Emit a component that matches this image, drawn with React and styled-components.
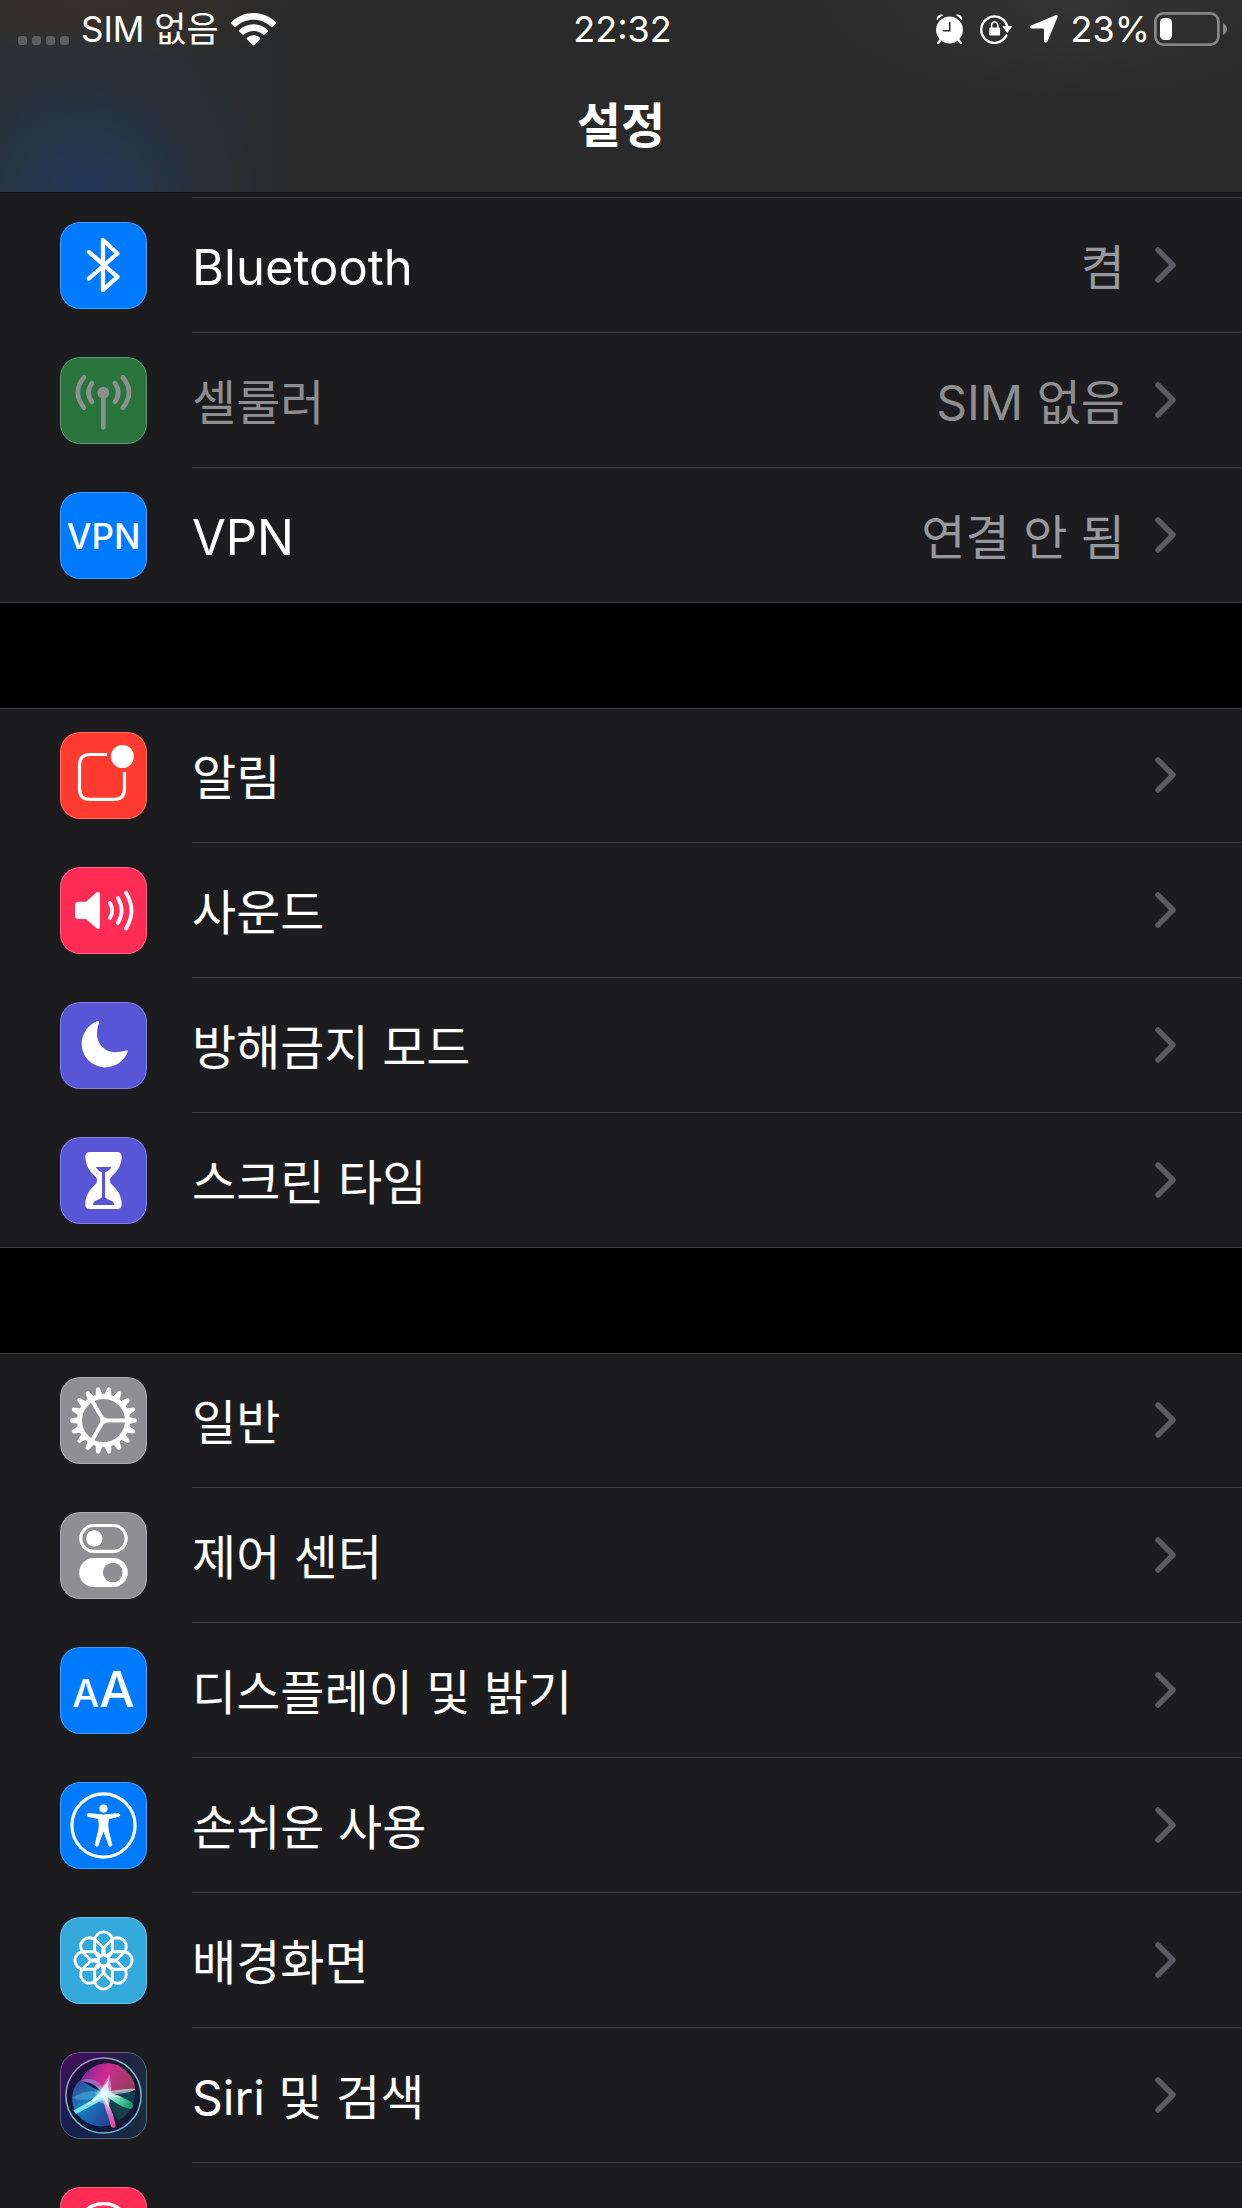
import React from 'react';
import styled, { createGlobalStyle } from 'styled-components';

const GlobalStyle = createGlobalStyle`
  *,
  *::before,
  *::after {
    box-sizing: border-box;
  }

  body {
    margin: 0;
    background-color: #000;
    color: #fff;
    font-family: Inter, 'Noto Sans CJK KR', sans-serif;
  }
`;

const Screen = styled.div`
  display: flex;
  flex-direction: column;
  height: 100vh;
  overflow: hidden;
`;

const Header = styled.header`
  flex-shrink: 0;
  border-bottom: 1px solid #141415;
  background:
    radial-gradient(circle at 85px 200px, #22365a 0, rgba(36, 55, 78, 0.85) 60px, rgba(38, 52, 66, 0.6) 110px, rgba(42, 42, 44, 0) 190px),
    radial-gradient(ellipse 200px 70px at 95px 0, #3a3028, rgba(42, 42, 42, 0)),
    radial-gradient(ellipse 260px 100px at 1070px 0, #343434, rgba(42, 42, 42, 0)),
    linear-gradient(90deg, #2d3134 0, #2a2a2b 300px);
`;

const StatusBar = styled.div`
  display: grid;
  grid-template-columns: 1fr auto 1fr;
  align-items: center;
  height: 58px;
  padding: 0 15px 0 18px;
  font-size: 36px;
  line-height: 48px;
`;

const StatusGroup = styled.div`
  display: flex;
  align-items: center;
  justify-content: ${({ $end }) => ($end ? 'flex-end' : 'flex-start')};
  gap: 12px;
`;

const Carrier = styled.span`
  font-size: 35px;
`;

const SignalDots = styled.span`
  display: flex;
  gap: 5px;
  padding-top: 23px;

  i {
    width: 9px;
    height: 9px;
    border-radius: 3px;
    background-color: #5e5e5e;
  }
`;

const StatusIcons = styled.span`
  display: flex;
  align-items: center;
  gap: 17px;
`;

const BatteryGroup = styled.span`
  display: flex;
  align-items: center;
  gap: 4px;
`;

const Title = styled.h1`
  margin: 0;
  height: 134px;
  padding-top: 38px;
  font-size: 48px;
  font-weight: 600;
  line-height: 60px;
  text-align: center;
`;

const Content = styled.main`
  flex: 1;
  min-height: 0;
  overflow: hidden;
`;

const Section = styled.ul`
  margin: 0 0 105px;
  padding: 0;
  list-style: none;
  background-color: #1c1c1e;
  box-shadow: ${({ $continued }) =>
    $continued ? 'inset 0 -1px #3d3d41' : 'inset 0 1px #3d3d41, inset 0 -1px #3d3d41'};

  /* bottom edge of the row scrolled under the header */
  &::before {
    content: '';
    display: ${({ $continued }) => ($continued ? 'block' : 'none')};
    height: 5px;
    margin-left: 192px;
    border-bottom: 1px solid #3d3d41;
  }
`;

const Row = styled.a`
  display: flex;
  align-items: center;
  gap: 45px;
  padding-left: 60px;
  color: ${({ $disabled }) => ($disabled ? '#8e8e8e' : '#fff')};
  text-decoration: none;
`;

const IconTile = styled.span`
  display: flex;
  flex-shrink: 0;
  align-items: center;
  justify-content: center;
  width: 87px;
  height: 87px;
  border-radius: 20px;
  overflow: hidden;
  background-color: ${({ $color }) => $color};
  position: relative;

  &::after {
    content: '';
    position: absolute;
    inset: 0;
    border: 1px solid rgba(255, 255, 255, 0.28);
    border-radius: 20px;
  }
`;

const TileText = styled.span`
  font-size: ${({ $size }) => $size}px;
  font-weight: 500;
  line-height: 48px;
`;

const TileLetters = styled.span`
  display: flex;
  align-items: baseline;
`;

const RowBody = styled.span`
  display: flex;
  flex: 1;
  align-items: center;
  height: 135px;
  padding-right: 66px;
  border-bottom: 1px solid #3d3d41;
`;

const Label = styled.span`
  flex: 1;
  padding-top: 6px;
  font-size: ${({ $latin }) => ($latin ? 49 : 48)}px;
  line-height: 60px;
`;

const Value = styled.span`
  padding: 6px 30px 0 0;
  color: ${({ $disabled }) => ($disabled ? '#8e8e8e' : '#98989f')};
  font-size: 48px;
  line-height: 60px;
`;

const Glyph = ({ children, ...rest }) => (
  <svg width="87" height="87" viewBox="0 0 87 87" fill="none" stroke="#fff" strokeLinecap="round" strokeLinejoin="round" aria-hidden="true" {...rest}>
    {children}
  </svg>
);

const Chevron = () => (
  <svg width="21" height="36" viewBox="0 0 21 36" fill="none" stroke="#5b5b60" strokeWidth="5.5" strokeLinecap="round" strokeLinejoin="round" aria-hidden="true">
    <path d="M3 3L18 18L3 33" />
  </svg>
);

const BluetoothIcon = () => (
  <Glyph strokeWidth="4.3">
    <path d="M29 30L57.5 54.8L43 68V18L57.5 31.5L29 56.5" />
  </Glyph>
);

const CellularIcon = () => (
  <Glyph stroke="#8e8e8e" strokeWidth="4.6">
    <circle cx="43.3" cy="35.7" r="6" fill="#8e8e8e" stroke="none" />
    <path d="M43.3 37V70.5M24 20.3Q11.5 35.5 24 50.7M32 26Q25 35.5 32 45M62.8 20.3Q75.3 35.5 62.8 50.7M54.8 26Q61.8 35.5 54.8 45" />
  </Glyph>
);

const VpnIcon = () => <TileText $size={35}>VPN</TileText>;

const NotificationIcon = () => (
  <Glyph strokeWidth="3.2">
    <path strokeLinecap="butt" d="M47 22.5H30Q19.5 22.5 19.5 33V57Q19.5 67.3 30 67.3H54Q64.5 67.3 64.5 57V40" />
    <circle cx="62.4" cy="24.5" r="11.5" fill="#fff" stroke="none" />
  </Glyph>
);

const SoundIcon = () => (
  <Glyph strokeWidth="3.8">
    <path fill="#fff" stroke="none" d="M18.5 34.7H26L36.5 25.5Q40 23.5 40 27.5V59.5Q40 63.5 36.5 61.2L26 52H18.5Q15 52 15 48.5V38.2Q15 34.7 18.5 34.7Z" />
    <path d="M50 36Q54.5 43.5 50 51M57.8 31Q65.5 43.5 57.8 56M66 25.7Q77 43.5 66 61.5" />
  </Glyph>
);

const MoonIcon = () => (
  <Glyph fill="#fff" stroke="none">
    <path d="M37 19.3C28 23 21.7 31.5 21.7 42A23.4 23.4 0 0 0 45 65.4C55 65.4 64 59.5 67.6 50.3C68.2 48.8 67.3 48.2 66 48.6C62 49.8 58.5 50.2 55 50.2C44.5 50.2 37 42 37 31.5C37 27.5 37.8 24 39 20.7C39.4 19.2 38.3 18.7 37 19.3Z" />
  </Glyph>
);

const HourglassIcon = () => (
  <Glyph fill="#fff" stroke="none">
    <path d="M30 15H57Q61.7 15 61.7 19.5C61.7 27 58 34 52.5 38.5Q47 43.4 52.5 48.2C58 53 61.7 59.5 61.7 67.5Q61.7 72 57 72H30Q25.3 72 25.3 67.5C25.3 59.5 29 53 34.5 48.2Q40 43.4 34.5 38.5C29 34 25.3 27 25.3 19.5Q25.3 15 30 15Z" />
    <path fill="#5856d6" d="M36 30H51.2Q51 32.5 45.1 35.3V60.3Q47 62.5 52 64Q54.5 65.5 54.2 68H33Q32.8 65.5 35 64Q40 62.5 42 60.3V35.3Q36.2 32.5 36 30Z" />
  </Glyph>
);

const TEETH = Array.from({ length: 18 }, (_, i) => i * 20);

const GearIcon = () => (
  <Glyph fill="#fff" stroke="none">
    <g transform="translate(43.5 43.5)">
      {TEETH.map((angle) => (
        <path key={angle} transform={`rotate(${angle})`} d="M25 -3.6L32.2 -2Q33.6 -1.6 33.6 0Q33.6 1.6 32.2 2L25 3.6Z" />
      ))}
      <circle r="24" fill="none" stroke="#fff" strokeWidth="5" />
      {[0, 120, 240].map((angle) => (
        <path key={angle} transform={`rotate(${angle})`} d="M0 -2H23V2H0Z" />
      ))}
      <circle r="3.2" />
    </g>
  </Glyph>
);

const ControlCenterIcon = () => (
  <Glyph strokeWidth="3.2">
    <rect x="20.8" y="13.5" width="45.4" height="25.8" rx="12.9" />
    <circle cx="34.2" cy="26.4" r="8.2" fill="#fff" stroke="none" />
    <rect x="19.2" y="46" width="48.6" height="29" rx="14.5" fill="#fff" stroke="none" />
    <circle cx="52.8" cy="60.5" r="9.8" fill="#8e8e93" stroke="none" />
  </Glyph>
);

const DisplayIcon = () => (
  <TileLetters>
    <TileText $size={38}>A</TileText>
    <TileText $size={50}>A</TileText>
  </TileLetters>
);

const AccessibilityIcon = () => (
  <Glyph strokeWidth="3.2">
    <circle cx="43.5" cy="43.5" r="31.6" />
    <circle cx="43.5" cy="26.6" r="4.1" fill="#fff" stroke="none" />
    <path fill="#fff" strokeWidth="1" d="M28.2 31.6Q43.5 34.4 58.8 31.6Q60.8 33 59.2 34.3L48.5 36.6Q47 43 48.3 48.5L51.8 62.5Q51.5 65 49.2 64L43.9 49.3H43.1L37.8 64Q35.5 65 35.2 62.5L38.7 48.5Q40 43 38.5 36.6L27.8 34.3Q26.2 33 28.2 31.6Z" />
  </Glyph>
);

const PETALS = [0, 45, 90, 135, 180, 225, 270, 315];

const WallpaperIcon = () => (
  <Glyph strokeWidth="2.9">
    <g transform="translate(43.5 43.5)">
      {PETALS.map((angle) => (
        <path key={angle} transform={`rotate(${angle})`} d="M-3 -4.5L-8.8 -9.2V-19.8A8.8 8.8 0 0 1 8.8 -19.8V-9.2L3 -4.5" />
      ))}
      <circle r="5.6" />
    </g>
  </Glyph>
);

const SiriIcon = () => (
  <Glyph stroke="none">
    <defs>
      <linearGradient id="siriBase" x1="0" y1="0" x2="0.5" y2="1">
        <stop offset="0" stopColor="#43105c" />
        <stop offset="0.5" stopColor="#221a52" />
        <stop offset="1" stopColor="#12254c" />
      </linearGradient>
      <linearGradient id="siriSide" x1="0.4" y1="0" x2="1" y2="0">
        <stop offset="0" stopColor="#1d2b3c" stopOpacity="0" />
        <stop offset="1" stopColor="#1d2b3c" />
      </linearGradient>
      <linearGradient id="siriRim" x1="0" y1="0" x2="0.6" y2="1">
        <stop offset="0" stopColor="#b06fc4" />
        <stop offset="0.5" stopColor="#83c9b2" />
        <stop offset="1" stopColor="#6fb4dc" />
      </linearGradient>
      <linearGradient id="siriPink" x1="0" y1="0.2" x2="1" y2="0.5">
        <stop offset="0" stopColor="#6c2a9c" />
        <stop offset="0.45" stopColor="#cf2b90" />
        <stop offset="1" stopColor="#943f5c" />
      </linearGradient>
      <linearGradient id="siriBlue" x1="0" y1="0" x2="0.9" y2="1">
        <stop offset="0" stopColor="#3c3a90" />
        <stop offset="0.45" stopColor="#1580bd" />
        <stop offset="1" stopColor="#243f9c" />
      </linearGradient>
      <linearGradient id="siriTail" x1="0" y1="0" x2="0.3" y2="1">
        <stop offset="0" stopColor="#fbe6ff" />
        <stop offset="0.5" stopColor="#d68bd6" />
        <stop offset="1" stopColor="#d8509f" />
      </linearGradient>
      <linearGradient id="siriGreen" x1="0" y1="0" x2="1" y2="0.5">
        <stop offset="0" stopColor="#e2fff8" />
        <stop offset="0.5" stopColor="#62d8b5" />
        <stop offset="1" stopColor="#1f9a6c" />
      </linearGradient>
      <radialGradient id="siriGlow">
        <stop offset="0" stopColor="#fff" />
        <stop offset="0.3" stopColor="#dffcff" stopOpacity="0.8" />
        <stop offset="1" stopColor="#9be8f4" stopOpacity="0" />
      </radialGradient>
      <filter id="siriSoft" x="-20%" y="-20%" width="140%" height="140%">
        <feGaussianBlur stdDeviation="0.4" />
      </filter>
    </defs>
    <rect width="87" height="87" fill="url(#siriBase)" />
    <rect width="87" height="87" fill="url(#siriSide)" />
    <circle cx="43.5" cy="43.5" r="37.6" fill="#13122e" fillOpacity="0.65" stroke="url(#siriRim)" strokeWidth="1.5" />
    <g filter="url(#siriSoft)">
      <path fill="url(#siriBlue)" d="M20 28C10 38 10 52 17 62C25 72 38 77 50 73L44 42Z" />
      <path fill="#175a60" fillOpacity="0.6" d="M44 42L75 40C75 52 69 62 58 69Z" />
      <path fill="url(#siriPink)" d="M20 30C26 16 40 9 54 12C67 16 76 28 75 38C64 40 54 39 44 42C37 34 29 28 20 30Z" />
      <path fill="#8f9fe0" fillOpacity="0.5" d="M20 29C32 24 42 29 44 42C37 34 29 29 20 29Z" />
      <path fill="#58b8e6" fillOpacity="0.45" d="M12 46C22 39 33 37 44 42C33 47 22 50 12 46Z" />
      <path fill="#f3a8dc" fillOpacity="0.55" d="M35 48L49.3 22.5C52 32 52 42 49 54Z" />
      <path fill="#d2faf1" fillOpacity="0.6" d="M44 40C54 39 66 36 75 37C74 41 56 42 44 43Z" />
      <path fill="url(#siriGreen)" d="M46 42C56 44 67 46 72 51C74.5 55 72 58 68 56.5C60 54 52 49 46 43Z" />
      <path fill="url(#siriTail)" d="M42 43C49 50 54 63 55.5 73C55.5 77 51.5 76.5 50.5 73C48.5 64 44 54 42 43Z" />
      <path fill="#74e6f2" d="M46 40L13.5 58.5L16 62L48 45Z" />
      <path fill="#fff" fillOpacity="0.75" d="M49 27Q47 36 50 40L64 46L48 44L49 56L43 45L24 55L40 40Z" />
    </g>
    <circle cx="44" cy="42" r="10" fill="url(#siriGlow)" />
  </Glyph>
);

const FingerprintIcon = () => (
  <Glyph strokeWidth="3.2">
    <path d="M22 28A26 26 0 0 1 65 28M17.5 43A26 26 0 0 1 18 39M69 39A26 26 0 0 1 69.5 43M25 55V42A18.5 18.5 0 0 1 62 42V50M34 62V42A9.5 9.5 0 0 1 53 42V58" />
  </Glyph>
);

const WifiIcon = () => (
  <svg width="45" height="33" viewBox="0 0 45 33" fill="#fff" aria-label="Wi-Fi">
    <path d="M22.5 0C31 0 39 3.3 44.6 9.2Q45.4 10 44.6 10.8L41.6 13.8Q40.9 14.5 40.1 13.8C35.4 9.3 29.2 6.8 22.5 6.8S9.6 9.3 4.9 13.8Q4.1 14.5 3.4 13.8L0.4 10.8Q-0.4 10 0.4 9.2C6 3.3 14 0 22.5 0Z" />
    <path d="M22.5 11.2C27.9 11.2 33 13.3 36.8 17.1Q37.5 17.8 36.8 18.5L33.6 21.6Q32.9 22.3 32.1 21.6C29.5 19.2 26.1 17.9 22.5 17.9S15.5 19.2 12.9 21.6Q12.1 22.3 11.4 21.6L8.2 18.5Q7.5 17.8 8.2 17.1C12 13.3 17.1 11.2 22.5 11.2Z" />
    <path d="M22.5 22.3C25 22.3 27.2 23.2 28.9 24.8Q29.6 25.5 28.9 26.2L23.3 32Q22.5 32.8 21.7 32L16.1 26.2Q15.4 25.5 16.1 24.8C17.8 23.2 20 22.3 22.5 22.3Z" />
  </svg>
);

const AlarmIcon = () => (
  <svg width="27" height="31" viewBox="0 0 27 31" fill="#fff" aria-label="Alarm">
    <circle cx="13.5" cy="16" r="13.4" />
    <path d="M1 6.5C-0.3 3 3.5 -1 7.6 1C6 1.8 2.5 4 1 6.5ZM26 6.5C27.3 3 23.5 -1 19.4 1C21 1.8 24.5 4 26 6.5Z" />
    <path d="M4.5 26L2.2 28.8M22.5 26L24.8 28.8" stroke="#fff" strokeWidth="2.4" strokeLinecap="round" />
    <path d="M13.7 8.5V16.7H7.5" fill="none" stroke="#2e2e2e" strokeWidth="1.6" strokeLinecap="round" />
  </svg>
);

const RotationLockIcon = () => (
  <svg width="33" height="30" viewBox="0 0 33 30" fill="none" stroke="#fff" aria-label="Rotation lock">
    <path strokeWidth="2.4" strokeLinecap="round" d="M26.3 21.5A13.2 13.2 0 1 1 27 11.5" />
    <path fill="#fff" strokeWidth="1" strokeLinejoin="round" d="M23 12.5H31.6L27.3 18.5Z" />
    <rect x="9.3" y="13.4" width="10.8" height="8.2" rx="1.2" fill="#fff" stroke="none" />
    <path strokeWidth="1.5" d="M11.6 14V11.2A3.1 3.1 0 0 1 17.8 11.2V14" />
  </svg>
);

const LocationIcon = () => (
  <svg width="28" height="28" viewBox="0 0 28 28" fill="#fff" aria-label="Location">
    <path d="M25.6 0.2Q28.4 -0.5 27.4 2.4L17.6 26.2Q16.8 28 15.4 27.6Q14 27.3 14 25.5V14.6Q14 13.6 13 13.6H2.2Q0.3 13.6 0 12.3Q-0.2 11.1 1.6 10.3Z" />
  </svg>
);

const BatteryIcon = () => (
  <svg width="73" height="34" viewBox="0 0 73 34" fill="none" aria-label="Battery">
    <rect x="1.4" y="1.4" width="63" height="31.2" rx="8" stroke="#858585" strokeWidth="2.8" />
    <rect x="6" y="6" width="12" height="22" rx="4.5" fill="#fff" />
    <path d="M69 11V23Q73 21 73 17T69 11Z" fill="#858585" />
  </svg>
);

const sections = [
  [
    { id: 'bluetooth', label: 'Bluetooth', value: '켬', color: '#007aff', Icon: BluetoothIcon, latin: true },
    { id: 'cellular', label: '셀룰러', value: 'SIM 없음', color: '#28743c', Icon: CellularIcon, disabled: true },
    { id: 'vpn', label: 'VPN', value: '연결 안 됨', color: '#007aff', Icon: VpnIcon, latin: true },
  ],
  [
    { id: 'notifications', label: '알림', color: '#ff3b30', Icon: NotificationIcon },
    { id: 'sounds', label: '사운드', color: '#ff2d55', Icon: SoundIcon },
    { id: 'do-not-disturb', label: '방해금지 모드', color: '#5856d6', Icon: MoonIcon },
    { id: 'screen-time', label: '스크린 타임', color: '#5856d6', Icon: HourglassIcon },
  ],
  [
    { id: 'general', label: '일반', color: '#8e8e93', Icon: GearIcon },
    { id: 'control-center', label: '제어 센터', color: '#8e8e93', Icon: ControlCenterIcon },
    { id: 'display', label: '디스플레이 및 밝기', color: '#007aff', Icon: DisplayIcon },
    { id: 'accessibility', label: '손쉬운 사용', color: '#007aff', Icon: AccessibilityIcon },
    { id: 'wallpaper', label: '배경화면', color: '#34aadc', Icon: WallpaperIcon },
    { id: 'siri', label: 'Siri 및 검색', color: '#221a52', Icon: SiriIcon },
    { id: 'touch-id', label: '', color: '#ff2d55', Icon: FingerprintIcon },
  ],
];

const SettingsRow = ({ id, label, value, color, Icon, disabled, latin }) => (
  <li>
    <Row href={`#${id}`} $disabled={disabled} aria-disabled={disabled} aria-label={label || id}>
      <IconTile $color={color}>
        <Icon />
      </IconTile>
      <RowBody>
        <Label $latin={latin}>{label}</Label>
        {value && <Value $disabled={disabled}>{value}</Value>}
        <Chevron />
      </RowBody>
    </Row>
  </li>
);

const App = () => (
  <>
    <GlobalStyle />
    <Screen>
      <Header>
        <StatusBar>
          <StatusGroup>
            <SignalDots>
              <i />
              <i />
              <i />
              <i />
            </SignalDots>
            <Carrier>SIM 없음</Carrier>
            <WifiIcon />
          </StatusGroup>
          <span>22:32</span>
          <StatusGroup $end>
            <StatusIcons>
              <AlarmIcon />
              <RotationLockIcon />
              <LocationIcon />
            </StatusIcons>
            <BatteryGroup>
              <span>23%</span>
              <BatteryIcon />
            </BatteryGroup>
          </StatusGroup>
        </StatusBar>
        <Title>설정</Title>
      </Header>
      <Content>
        {sections.map((rows, index) => (
          <Section key={rows[0].id} $continued={index === 0}>
            {rows.map((row) => (
              <SettingsRow key={row.id} {...row} />
            ))}
          </Section>
        ))}
      </Content>
    </Screen>
  </>
);

export default App;
